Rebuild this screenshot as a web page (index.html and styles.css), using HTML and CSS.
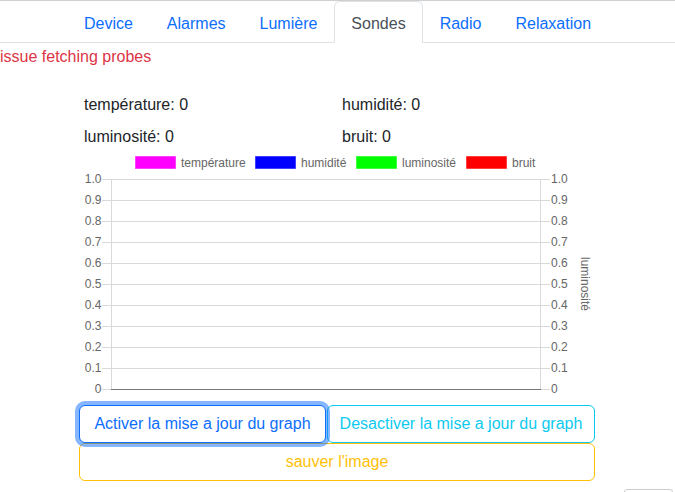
FILE: index.html
```html
<!DOCTYPE html>
<html lang="fr">
<head>
<meta charset="utf-8">
<title>Sondes</title>
<link rel="stylesheet" href="styles.css">
</head>
<body>
<div class="page">
  <ul class="tabs">
    <li><a class="tab">Device</a></li>
    <li><a class="tab">Alarmes</a></li>
    <li><a class="tab">Lumière</a></li>
    <li><a class="tab active">Sondes</a></li>
    <li><a class="tab">Radio</a></li>
    <li><a class="tab">Relaxation</a></li>
  </ul>
  <div class="error">issue fetching probes</div>
  <div class="container">
    <div class="values">
      <div class="val">température: 0</div>
      <div class="val">humidité: 0</div>
      <div class="val">luminosité: 0</div>
      <div class="val">bruit: 0</div>
    </div>
    <svg class="chart" width="516" height="256" viewBox="0 0 516 256" xmlns="http://www.w3.org/2000/svg">
      <g class="legend">
        <rect x="56.5" y="7.5" width="40" height="12" fill="#ff00ff" stroke="rgba(255,0,255,0.5)"/>
        <text x="102" y="17.5">température</text>
        <rect x="176.5" y="7.5" width="40" height="12" fill="#0000ff" stroke="rgba(0,0,255,0.5)"/>
        <text x="222" y="17.5">humidité</text>
        <rect x="277.5" y="7.5" width="40" height="12" fill="#00ff00" stroke="rgba(0,255,0,0.5)"/>
        <text x="323" y="17.5">luminosité</text>
        <rect x="387.5" y="7.5" width="40" height="12" fill="#ff0000" stroke="rgba(255,0,0,0.5)"/>
        <text x="433" y="17.5">bruit</text>
      </g>
      <g class="grid" stroke="#d9d9d9" stroke-width="1">
        <line x1="23" y1="30.5" x2="471" y2="30.5"/>
        <line x1="23" y1="51.5" x2="471" y2="51.5"/>
        <line x1="23" y1="72.5" x2="471" y2="72.5"/>
        <line x1="23" y1="93.5" x2="471" y2="93.5"/>
        <line x1="23" y1="114.5" x2="471" y2="114.5"/>
        <line x1="23" y1="135.5" x2="471" y2="135.5"/>
        <line x1="23" y1="156.5" x2="471" y2="156.5"/>
        <line x1="23" y1="177.5" x2="471" y2="177.5"/>
        <line x1="23" y1="198.5" x2="471" y2="198.5"/>
        <line x1="23" y1="219.5" x2="471" y2="219.5"/>
        <line x1="23" y1="240.5" x2="471" y2="240.5"/>
        <line x1="32.5" y1="30" x2="32.5" y2="241"/>
        <line x1="461.5" y1="30" x2="461.5" y2="241"/>
      </g>
      <line x1="32" y1="240.5" x2="462" y2="240.5" stroke="#777" stroke-width="1"/>
      <g class="ticks-left" text-anchor="end">
        <text x="22.5" y="34">1.0</text>
        <text x="22.5" y="55">0.9</text>
        <text x="22.5" y="76">0.8</text>
        <text x="22.5" y="97">0.7</text>
        <text x="22.5" y="118">0.6</text>
        <text x="22.5" y="139">0.5</text>
        <text x="22.5" y="160">0.4</text>
        <text x="22.5" y="181">0.3</text>
        <text x="22.5" y="202">0.2</text>
        <text x="22.5" y="223">0.1</text>
        <text x="22.5" y="244">0</text>
      </g>
      <g class="ticks-right">
        <text x="472" y="34">1.0</text>
        <text x="472" y="55">0.9</text>
        <text x="472" y="76">0.8</text>
        <text x="472" y="97">0.7</text>
        <text x="472" y="118">0.6</text>
        <text x="472" y="139">0.5</text>
        <text x="472" y="160">0.4</text>
        <text x="472" y="181">0.3</text>
        <text x="472" y="202">0.2</text>
        <text x="472" y="223">0.1</text>
        <text x="472" y="244">0</text>
      </g>
      <text class="axis-title" x="0" y="0" text-anchor="middle" transform="translate(501.5 135) rotate(90)">luminosité</text>
    </svg>
    <div class="btn-row">
      <button class="btn btn-primary focus">Activer la mise a jour du graph</button>
      <button class="btn btn-info">Desactiver la mise a jour du graph</button>
    </div>
    <button class="btn btn-warning wide">sauver l'image</button>
  </div>
</div>
<div class="corner-box"></div>
</body>
</html>
```

FILE: styles.css
```css
* { box-sizing: border-box; }
html, body {
  margin: 0;
  padding: 0;
  background: #fff;
  overflow: hidden;
}
body {
  font-family: "Liberation Sans", Arial, sans-serif;
  font-size: 16px;
  line-height: 1.5;
  color: #212529;
}
.page {
  border-top: 1px solid #cfcfcf;
}
.tabs {
  list-style: none;
  margin: 0;
  padding: 0;
  display: flex;
  justify-content: center;
  border-bottom: 1px solid #dee2e6;
}
.tabs li {
  margin-bottom: -1px;
}
.tab {
  display: block;
  padding: 10px 16px 6px;
  color: #0d6efd;
  border: 1px solid transparent;
  border-top-left-radius: 6px;
  border-top-right-radius: 6px;
  cursor: pointer;
}
.tab.active {
  color: #495057;
  background: #fff;
  border-color: #dee2e6 #dee2e6 #fff;
}
.error {
  color: #dc3545;
  padding-top: 2px;
}
.container {
  width: 541px;
  margin: 0 auto;
  padding: 0 13px 0 12px;
}
.values {
  display: grid;
  grid-template-columns: 258px 258px;
  row-gap: 8px;
  padding-left: 5px;
  margin-top: 24px;
}
.chart {
  display: block;
  font-family: "Liberation Sans", Arial, sans-serif;
}
.chart text {
  font-size: 12px;
  fill: #666;
}
.btn-row {
  display: flex;
}
.btn {
  font-family: "Liberation Sans", Arial, sans-serif;
  font-size: 16px;
  line-height: 24px;
  padding: 6px 0;
  background: #fff;
  border: 1px solid;
  border-radius: 6px;
  cursor: pointer;
  height: 38px;
  white-space: nowrap;
  text-align: center;
}
.btn-primary {
  color: #0d6efd;
  border-color: #0d6efd;
  width: 247px;
  flex: none;
}
.btn-primary.focus {
  box-shadow: 0 0 0 4px rgba(13, 110, 253, 0.5);
  position: relative;
  z-index: 1;
}
.btn-info {
  color: #0dcaf0;
  border-color: #0dcaf0;
  flex: 1;
  margin-left: 1px;
}
.btn-warning {
  color: #ffc107;
  border-color: #ffc107;
}
.wide {
  display: block;
  width: 100%;
}
.corner-box {
  position: fixed;
  top: 489px;
  left: 624px;
  width: 49px;
  height: 30px;
  border: 1px solid #cccccc;
  border-radius: 3px;
  background: #fff;
}
```
